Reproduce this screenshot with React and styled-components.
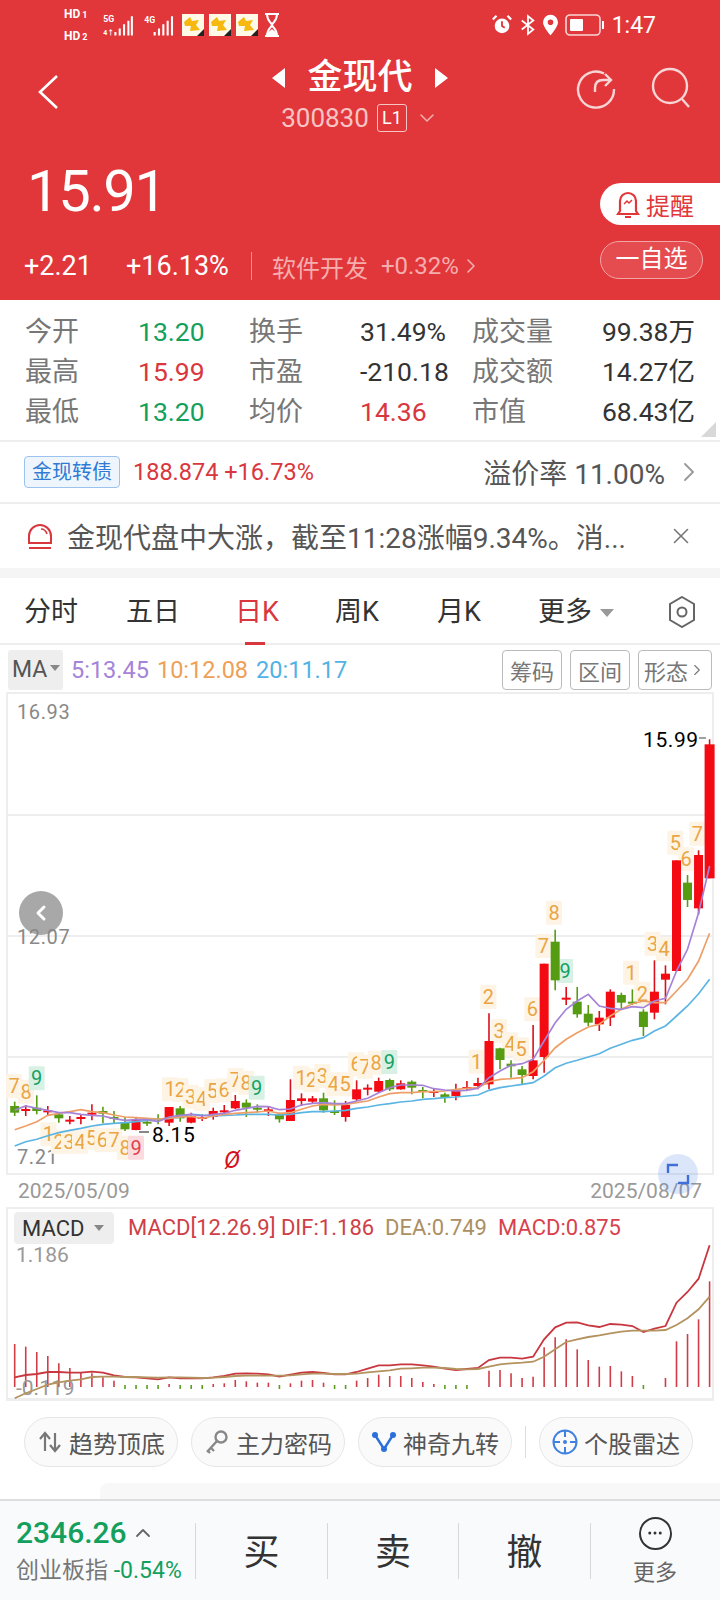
import React from "react";
import styled, { createGlobalStyle } from "styled-components";
import { ChevronLeft, ChevronRight, ChevronDown, ChevronUp, X, Ellipsis } from "lucide-react";

const GlobalStyle = createGlobalStyle`
  html, body { margin: 0; padding: 0; background: #fff; }
  * { box-sizing: border-box; }
  body { font-family: Roboto, "Noto Sans CJK SC", sans-serif; }
`;

const RED = "#e1373b";
const UP = "#d9363e";
const DOWN = "#12a05c";
const ORANGE = "#e9a544";

// chart data read off the picture: stepX per candle, y in page pixels
const stepX = (i) => 14.7 + 11.03 * i;
const L = (v) => 880 + v / 3;
const R = (v) => 700 + v / 3;

// [kind, bodyTop, bodyBottom, wickTop, wickBottom]
const candlesLeft = [
  ["g", 675, 695, 662, 705], ["r", 684, 688, 672, 705], ["g", 680, 690, 643, 700], ["r", 688, 692, 675, 705],
  ["g", 700, 712, 698, 725], ["r", 716, 720, 705, 730], ["r", 708, 712, 700, 730], ["r", 695, 699, 670, 718],
  ["g", 690, 698, 677, 727], ["g", 708, 712, 690, 726], ["g", 724, 745, 708, 750], ["r", 716, 747, 710, 748],
  ["g", 722, 724, 715, 735], ["g", 712, 714, 700, 730], ["r", 678, 725, 678, 735], ["g", 682, 712, 675, 722],
  ["r", 705, 725, 695, 727], ["r", 708, 711, 700, 720], ["r", 690, 708, 680, 716], ["r", 688, 691, 672, 705],
  ["r", 660, 682, 642, 684], ["g", 665, 680, 655, 708], ["g", 680, 683, 670, 695], ["r", 685, 688, 678, 705],
  ["g", 700, 715, 695, 725], ["r", 657, 720, 595, 720], ["r", 652, 660, 637, 675], ["r", 652, 662, 645, 668],
  ["g", 652, 688, 635, 695], ["g", 690, 692, 658, 702], ["r", 672, 708, 660, 722], ["r", 625, 655, 598, 660],
];
const candlesRight = [
  ["r", 1160, 1165, 1150, 1183], ["r", 1140, 1172, 1130, 1175], ["g", 1137, 1165, 1133, 1170], ["r", 1147, 1165, 1138, 1166],
  ["g", 1142, 1160, 1138, 1180], ["g", 1167, 1170, 1158, 1192], ["r", 1170, 1173, 1162, 1188], ["g", 1180, 1190, 1175, 1205],
  ["r", 1168, 1185, 1148, 1198], ["r", 1158, 1162, 1140, 1170], ["r", 1146, 1155, 1130, 1165], ["r", 1020, 1150, 937, 1165],
  ["g", 1042, 1077, 1040, 1105], ["g", 1088, 1096, 1078, 1130], ["g", 1105, 1122, 1095, 1150], ["r", 1078, 1125, 972, 1135],
  ["r", 788, 1068, 788, 1115], ["g", 722, 838, 686, 868], ["r", 890, 895, 858, 912], ["g", 902, 940, 858, 950],
  ["g", 938, 965, 912, 975], ["r", 950, 970, 930, 990], ["r", 872, 950, 865, 975], ["g", 882, 905, 875, 925],
  ["g", 902, 908, 865, 912], ["g", 932, 978, 925, 1005], ["r", 872, 935, 778, 955], ["r", 818, 836, 793, 910],
  ["r", 478, 810, 478, 812], ["g", 545, 597, 522, 618], ["r", 462, 622, 448, 640], ["r", 130, 532, 115, 532],
];
const candles = [
  ...candlesLeft.map(([k, a, b, c, d]) => [k, L(a), L(b), L(c), L(d)]),
  ...candlesRight.map(([k, a, b, c, d]) => [k, R(a), R(b), R(c), R(d)]),
];

const toLine = (left, right) =>
  [...left.map(L), ...right.map(R)].map((y, i) => `${stepX(i).toFixed(1)},${y.toFixed(1)}`).join(" ");

const ma5 = toLine(
  [688, 675, 682, 688, 695, 695, 700, 703, 705, 713, 718, 716, 716, 722, 708, 703, 700, 705, 700, 697, 688, 682, 676, 677, 686, 684, 672, 667, 665, 668, 668, 660],
  [1192, 1175, 1160, 1152, 1152, 1153, 1163, 1167, 1170, 1168, 1162, 1130, 1110, 1093, 1088, 1075, 1020, 965, 925, 900, 880, 915, 922, 925, 917, 920, 900, 892, 810, 745, 635, 495]
);
const ma10 = toLine(
  [746, 735, 722, 703, 697, 692, 686, 692, 695, 702, 708, 710, 712, 714, 712, 708, 706, 712, 705, 700, 697, 695, 693, 690, 697, 695, 685, 675, 670, 672, 670, 665],
  [1200, 1188, 1178, 1175, 1175, 1172, 1172, 1170, 1165, 1162, 1160, 1142, 1135, 1133, 1130, 1112, 1078, 1040, 1015, 995, 978, 970, 945, 925, 908, 900, 905, 905, 870, 835, 780, 697]
);
const ma20 = toLine(
  [795, 782, 775, 764, 755, 748, 742, 735, 730, 727, 725, 722, 718, 714, 712, 708, 700, 702, 705, 703, 702, 700, 700, 700, 702, 700, 695, 692, 692, 690, 688, 682],
  [1218, 1212, 1208, 1203, 1200, 1195, 1193, 1190, 1188, 1185, 1182, 1168, 1160, 1155, 1150, 1145, 1125, 1100, 1087, 1078, 1068, 1058, 1042, 1030, 1018, 1010, 990, 975, 945, 915, 878, 835]
);

// [digit, x, y] in the two crops; kind n = orange, g = green 9, r = red 9
const tagsLeft = [
  ["7", 42, 615], ["8", 78, 632], ["9", 110, 592, "g"], ["1", 145, 760], ["2", 177, 782], ["3", 207, 782],
  ["4", 240, 782], ["5", 275, 770], ["6", 307, 778], ["7", 342, 777], ["8", 375, 800], ["9", 408, 800, "r"],
  ["1", 510, 625], ["2", 541, 627], ["3", 572, 647], ["4", 605, 655], ["5", 637, 630], ["6", 672, 628],
  ["7", 706, 597], ["8", 738, 605], ["9", 770, 620, "g"], ["1", 903, 590], ["2", 935, 598], ["3", 967, 585],
  ["4", 1000, 610], ["5", 1035, 610], ["6", 1068, 550],
];
const tagsRight = [
  ["7", 15, 1097], ["8", 48, 1085], ["9", 88, 1083, "g"], ["1", 350, 1082], ["2", 385, 888], ["3", 417, 990],
  ["4", 450, 1030], ["5", 483, 1045], ["6", 517, 925], ["7", 550, 735], ["8", 582, 635], ["9", 615, 810, "g"],
  ["1", 813, 815], ["2", 847, 878], ["3", 878, 728], ["4", 912, 745], ["5", 946, 425], ["6", 978, 475], ["7", 1012, 398],
];
const tags = [
  ...tagsLeft.map(([d, x, y, k]) => [d, x / 3, L(y), k]),
  ...tagsRight.map(([d, x, y, k]) => [d, 360 + x / 3, R(y), k]),
];
const tagColors = {
  n: ["#fdf4e6", ORANGE],
  g: ["#d9f1e4", "#14a163"],
  r: ["#fbdcde", "#e0404c"],
};

const M = (v) => 1190 + v / 3;
// top of each MACD bar; above zero is red. "g" bars are short green ticks
const macdBars = [
  462, 470, 486, 498, 520, 534, 546, 550, 562, 572, "g", "g", "g", "g", 582, "g", "g", "g", 582, 580, 570, 574, 578, 578, "g", 580,
  572, 570, 578, "g", "g", 572, 564, 554, 558, 558, 564, 576, 582, "g", "g", "g", null, 542, 540, 550, 564, 560, 472, 442, 448, 478,
  510, 530, 528, 544, 558, "g", null, 564, 454, 432, 388, 274,
];
const dif = [562, 555, 552, 546, 546, 548, 548, 545, 548, 556, 561, 562, 565, 568, 562, 565, 565, 565, 562, 558, 551, 550, 551, 553, 560, 554, 548, 546, 549, 553, 553, 546, 536, 526, 526, 523, 523, 526, 530, 536, 540, 537, 534, 510, 503, 503, 506, 500, 448, 412, 398, 397, 406, 411, 402, 404, 408, 426, 416, 408, 338, 306, 266, 166];
const dea = [625, 610, 597, 584, 577, 572, 568, 561, 560, 560, 561, 561, 562, 563, 562, 562, 563, 564, 563, 561, 558, 557, 557, 557, 557, 556, 553, 551, 551, 552, 552, 551, 547, 544, 541, 536, 535, 533, 533, 534, 537, 538, 537, 530, 523, 520, 518, 515, 500, 478, 456, 448, 441, 436, 430, 425, 422, 422, 422, 420, 405, 385, 358, 320];
const macdLine = (ys) => ys.map((v, i) => `${stepX(i).toFixed(1)},${M(v).toFixed(1)}`).join(" ");

const stats = [
  ["今开", "13.20", DOWN, "换手", "31.49%", "#333", "成交量", "99.38万"],
  ["最高", "15.99", UP, "市盈", "-210.18", "#333", "成交额", "14.27亿"],
  ["最低", "13.20", DOWN, "均价", "14.36", UP, "市值", "68.43亿"],
];

function YellowApp() {
  return (
    <AppIcon viewBox="0 0 22 22">
      <rect width="22" height="22" fill="#fff9e8" />
      <path d="M2 8 L8 3 L10 7 L17 6 L14 11 L18 16 L8 17 L9 12 L3 12Z" fill="#f7b90f" />
      <path d="M15 22 L22 15 V22Z" fill="#222" />
    </AppIcon>
  );
}

function StatusBar() {
  return (
    <StatusRow>
      <SimStack>
        <SimTag>HD<small>1</small></SimTag>
        <SimTag>HD<small>2</small></SimTag>
      </SimStack>
      <Signal viewBox="0 0 34 30" $w={34}>
        <text x="0" y="11" fontSize="10" fill="#fff" fontWeight="700">5G</text>
        <text x="0" y="26" fontSize="8" fill="#fff" fontWeight="700">4↑</text>
        <path d="M14 27v-4M19 27v-8M24 27v-13M29 27v-17M33 27V5" stroke="#fff" strokeWidth="2.4" />
      </Signal>
      <Signal viewBox="0 0 34 30" $w={34}>
        <text x="0" y="13" fontSize="10" fill="#fff" fontWeight="700">4G</text>
        <path d="M12 27v-4M17 27v-8M22 27v-13M27 27v-17M32 27V5" stroke="#fff" strokeWidth="2.4" />
      </Signal>
      <YellowApp />
      <YellowApp />
      <YellowApp />
      <Signal viewBox="0 0 16 24" $w={16}>
        <path d="M1 1h14M1 23h14M3 1c0 7 4 8 5 11 1-3 5-4 5-11M3 23c0-7 4-8 5-11 1 3 5 4 5 11" stroke="#fff" strokeWidth="2" fill="none" />
        <path d="M3 23c0-4 3-5 5-7 2 2 5 3 5 7Z" fill="#fff" />
      </Signal>
      <StatusRight>
        <Signal viewBox="0 0 24 24" $w={22}>
          <circle cx="12" cy="13" r="8" fill="#fff" />
          <path d="M12 8v5l3 2" stroke={RED} strokeWidth="2" fill="none" />
          <path d="M2 6l4-4M22 6l-4-4" stroke="#fff" strokeWidth="2.4" />
        </Signal>
        <Signal viewBox="0 0 18 24" $w={16}>
          <path d="M2 7l13 10-6 5V2l6 5L2 17" stroke="#fff" strokeWidth="2" fill="none" />
        </Signal>
        <Signal viewBox="0 0 16 22" $w={15}>
          <path fillRule="evenodd" d="M8 0a8 8 0 0 1 8 8c0 5-8 14-8 14S0 13 0 8a8 8 0 0 1 8-8Zm0 5a3 3 0 1 0 0 6 3 3 0 0 0 0-6Z" fill="#fff" />
        </Signal>
        <Signal viewBox="0 0 40 24" $w={40}>
          <rect x="1" y="2" width="34" height="20" rx="4" stroke="#fff" strokeOpacity=".8" strokeWidth="1.6" fill="none" />
          <rect x="5" y="6" width="13" height="12" rx="1" fill="#fff" />
          <path d="M38 8v8" stroke="#fff" strokeWidth="2" />
        </Signal>
        <StatusTime>1:47</StatusTime>
      </StatusRight>
    </StatusRow>
  );
}

function KChart() {
  return (
    <ChartSvg viewBox="8 693 704 481" $h={481}>
      {[814, 935, 1056].map((y) => (
        <line key={y} x1="8" x2="712" y1={y} y2={y} stroke="#eeeeee" strokeWidth="2" />
      ))}
      <g fontSize="20" fill="#888" letterSpacing=".6">
        <text x="17" y="718">16.93</text>
        <text x="17" y="943">12.07</text>
        <text x="17" y="1163">7.21</text>
      </g>
      {tags.map(([d, x, y, k], i) => {
        const [bg, fg] = tagColors[k || "n"];
        return (
          <g key={i}>
            <rect x={x - 8} y={y - 12} width="16" height="24" fill={bg} rx="1" />
            <text x={x} y={y + 7} textAnchor="middle" fontSize="20" fill={fg}>{d}</text>
          </g>
        );
      })}
      {candles.map(([k, a, b, c, d], i) => {
        const x = stepX(i);
        const col = k === "r" ? "#f40a12" : "#559c12";
        const w = i === 63 ? 10 : 9;
        return (
          <g key={i}>
            <line x1={x} x2={x} y1={c} y2={d} stroke={k === "r" ? "#d9101a" : col} strokeWidth="1.6" />
            <rect x={x - w / 2} y={a} width={w} height={Math.max(b - a, 2)} fill={col} />
          </g>
        );
      })}
      <polyline points={ma20} fill="none" stroke="#5bb5e3" strokeWidth="1.7" />
      <polyline points={ma10} fill="none" stroke="#ee9f68" strokeWidth="1.7" />
      <polyline points={ma5} fill="none" stroke="#a583d8" strokeWidth="1.7" />
      <g fontSize="21" fill="#000" letterSpacing=".6">
        <text x="152" y="1141">8.15</text>
        <line x1="139" x2="149" y1="1131" y2="1131" stroke="#555" strokeWidth="1.4" />
        <text x="643" y="746">15.99</text>
        <line x1="699" x2="706" y1="737" y2="737" stroke="#777" strokeWidth="1.4" />
      </g>
      <text x="232" y="1167" textAnchor="middle" fontSize="24" fontStyle="italic" fill="#d4101c">Ø</text>
    </ChartSvg>
  );
}

function MacdChart() {
  return (
    <ChartSvg viewBox="8 1240 704 158" $h={158}>
      {macdBars.map((top, i) => {
        if (top === null) return null;
        const x = stepX(i);
        if (top === "g") {
          return <line key={i} x1={x} x2={x} y1={1385} y2={1389} stroke="#5b9d1c" strokeWidth="1.6" />;
        }
        return <line key={i} x1={x} x2={x} y1={M(top)} y2={1387} stroke="#d13c46" strokeWidth="1.6" />;
      })}
      <g fontSize="21" fill="#999">
        <text x="16" y="1262">1.186</text>
        <text x="16" y="1395">-0.119</text>
      </g>
      <polyline points={macdLine(dif)} fill="none" stroke="#c8373f" strokeWidth="1.8" />
      <polyline points={macdLine(dea)} fill="none" stroke="#b3925f" strokeWidth="1.8" />
    </ChartSvg>
  );
}

const chipIcons = {
  trend: (
    <svg width="26" height="26" viewBox="0 0 26 26" fill="none" stroke="#777" strokeWidth="2.2">
      <path d="M8 22V5M3 10l5-6 5 6M18 4v17M13 16l5 6 5-6" />
    </svg>
  ),
  key: (
    <svg width="26" height="26" viewBox="0 0 26 26" fill="none" stroke="#888" strokeWidth="2.4">
      <circle cx="17" cy="8" r="5.5" />
      <path d="M13 12L3 23M7 19l3 3M4 22l2 2" />
    </svg>
  ),
  nine: (
    <svg width="26" height="26" viewBox="0 0 26 26" fill="none" stroke="#2b6fdb" strokeWidth="2.4">
      <path d="M4 6l9 14 9-14" />
      <circle cx="4" cy="6" r="3" fill="#2b6fdb" stroke="none" />
      <circle cx="22" cy="6" r="3" fill="#2b6fdb" stroke="none" />
      <circle cx="13" cy="20" r="3" fill="#2b6fdb" stroke="none" />
    </svg>
  ),
  radar: (
    <svg width="26" height="26" viewBox="0 0 26 26" fill="none" stroke="#3f80e0" strokeWidth="2">
      <circle cx="13" cy="13" r="11.5" />
      <circle cx="13" cy="13" r="2" fill="#3f80e0" stroke="none" />
      <path d="M13 1v7M13 18v7M1 13h7M18 13h7" />
    </svg>
  ),
};

export default function App() {
  return (
    <Page>
      <GlobalStyle />
      <Header>
        <StatusBar />
        <NavRow>
          <BackIcon width="22" height="36" viewBox="0 0 22 36" fill="none" stroke="#fff" strokeWidth="2.6">
            <path d="M20 2L3 18l17 16" />
          </BackIcon>
          <TitleBox>
            <TitleLine>
              <Arrow $dir="left" />
              <Title>金现代</Title>
              <Arrow $dir="right" />
            </TitleLine>
            <CodeLine>
              300830 <LevelTag>L1</LevelTag>
              <ChevronDown size={24} strokeWidth={1.5} color="#f3b0b0" />
            </CodeLine>
          </TitleBox>
          <NavIcons>
            <svg width="42" height="44" viewBox="0 0 42 44" fill="none" stroke="#f8d5d5" strokeWidth="2.4">
              <path d="M28 7.5A18 18 0 1 0 38 23" />
              <path d="M19 26v-4c0-5 3-8 8-8h7M29 8l6 6-6 6" />
            </svg>
            <svg width="42" height="44" viewBox="0 0 42 44" fill="none" stroke="#f8d5d5" strokeWidth="2.4">
              <circle cx="20" cy="20" r="17" />
              <path d="M32 33l7 8" />
            </svg>
          </NavIcons>
        </NavRow>
        <PriceRow>
          <Price>15.91</Price>
          <RemindBtn>
            <svg width="24" height="30" viewBox="0 0 24 30" fill="none" stroke={RED} strokeWidth="2.2">
              <path d="M4 22V12a8 8 0 0 1 16 0v10l2 3H2ZM9 28h6" />
              <path d="M8 15l3-3 2 2 3-3" strokeWidth="1.5" />
            </svg>
            提醒
          </RemindBtn>
        </PriceRow>
        <QuoteRow>
          <Change>+2.21</Change>
          <Change $gap>+16.13%</Change>
          <QuoteSep />
          <Sector>软件开发</Sector>
          <SectorPct>+0.32%</SectorPct>
          <ChevronRight size={24} strokeWidth={1.6} color="#f3b0b0" />
          <WatchBtn>一自选</WatchBtn>
        </QuoteRow>
      </Header>

      <StatsPanel>
        {stats.map((r) => (
          <React.Fragment key={r[0]}>
            <StatLabel>{r[0]}</StatLabel>
            <StatValue $color={r[2]}>{r[1]}</StatValue>
            <StatLabel>{r[3]}</StatLabel>
            <StatValue $color={r[5]}>{r[4]}</StatValue>
            <StatLabel>{r[6]}</StatLabel>
            <StatValue $color="#333" $right>{r[7]}</StatValue>
          </React.Fragment>
        ))}
        <Corner />
      </StatsPanel>

      <BondRow>
        <BondTag>金现转债</BondTag>
        <BondQuote>188.874 +16.73%</BondQuote>
        <Premium>溢价率 11.00%</Premium>
        <ChevronRight size={32} strokeWidth={1.4} color="#999" />
      </BondRow>

      <NoticeRow>
        <svg width="26" height="26" viewBox="0 0 26 26" fill="none" stroke="#d9363e" strokeWidth="2">
          <path d="M2 20v-7a11 11 0 0 1 22 0v7ZM2 25h22" />
          <path d="M14 6c3 0 5 2 6 5" strokeWidth="1.6" />
        </svg>
        <NoticeText>金现代盘中大涨，截至11:28涨幅9.34%。消...</NoticeText>
        <X size={26} strokeWidth={1.5} color="#777" />
      </NoticeRow>
      <Band />

      <Tabs>
        <Tab>分时</Tab>
        <Tab>五日</Tab>
        <Tab $active>日K</Tab>
        <Tab>周K</Tab>
        <Tab>月K</Tab>
        <Tab>更多<TabCaret /></Tab>
        <svg width="28" height="32" viewBox="0 0 28 32" fill="none" stroke="#666" strokeWidth="2">
          <path d="M14 1l12 7v16l-12 7-12-7V8Z" />
          <circle cx="14" cy="16" r="4.5" />
        </svg>
      </Tabs>

      <MaRow>
        <MaBadge>MA<SmallCaret /></MaBadge>
        <MaValue $color="#a583d8">5:13.45</MaValue>
        <MaValue $color="#ee9f58">10:12.08</MaValue>
        <MaValue $color="#52b2e6">20:11.17</MaValue>
        <MaTools>
          <ToolBtn>筹码</ToolBtn>
          <ToolBtn>区间</ToolBtn>
          <ToolBtn $wide>形态<ChevronRight size={18} strokeWidth={1.5} /></ToolBtn>
        </MaTools>
      </MaRow>

      <ChartFrame>
        <BackBubble><ChevronLeft size={24} strokeWidth={3} color="#fff" /></BackBubble>
        <KChart />
        <ZoomBubble>
          <svg width="24" height="24" viewBox="0 0 24 24" fill="none" stroke="#3f6fd8" strokeWidth="2.4">
            <path d="M2 11V3h10M22 13v8H12" />
          </svg>
        </ZoomBubble>
      </ChartFrame>
      <DateRow>
        <span>2025/05/09</span>
        <span>2025/08/07</span>
      </DateRow>

      <MacdFrame>
        <MacdHead>
          <MacdBadge>MACD<SmallCaret /></MacdBadge>
          <MacdText $color="#cf3f48">MACD[12.26.9] DIF:1.186</MacdText>
          <MacdText $color="#ab8f63">DEA:0.749</MacdText>
          <MacdText $color="#d9424c">MACD:0.875</MacdText>
        </MacdHead>
        <MacdChart />
      </MacdFrame>

      <Chips>
        <Chip>{chipIcons.trend}趋势顶底</Chip>
        <Chip>{chipIcons.key}主力密码</Chip>
        <Chip>{chipIcons.nine}神奇九转</Chip>
        <ChipSep />
        <Chip>{chipIcons.radar}个股雷达</Chip>
      </Chips>
      <PeekCard />

      <BottomBar>
        <IndexBox>
          <IndexValue>2346.26<ChevronUp size={24} strokeWidth={1.8} color="#666" /></IndexValue>
          <IndexName>创业板指 <em>-0.54%</em></IndexName>
        </IndexBox>
        <TradeBtn>买</TradeBtn>
        <TradeBtn>卖</TradeBtn>
        <TradeBtn>撤</TradeBtn>
        <MoreBtn>
          <MoreCircle><Ellipsis size={18} strokeWidth={2} color="#333" /></MoreCircle>
          更多
        </MoreBtn>
      </BottomBar>
    </Page>
  );
}

const Page = styled.div`
  width: 720px;
  height: 1600px;
  overflow: hidden;
  background: #fff;
  display: flex;
  flex-direction: column;
`;
const Header = styled.header`
  height: 300px;
  background: ${RED};
  color: #fff;
  display: flex;
  flex-direction: column;
`;
const StatusRow = styled.div`
  height: 48px;
  padding: 2px 64px 0;
  display: flex;
  align-items: center;
  gap: 7px;
`;
const SimStack = styled.div`
  width: 30px;
  display: flex;
  flex-direction: column;
  gap: 7px;
`;
const SimTag = styled.span`
  font-size: 12px;
  line-height: 14px;
  font-weight: 700;
  color: #fff;
  small { font-size: 9px; margin-left: 2px; }
`;
const Signal = styled.svg`
  width: ${(p) => p.$w}px;
  height: 26px;
  flex: none;
`;
const AppIcon = styled.svg`
  width: 22px;
  height: 22px;
  flex: none;
  margin-right: -1px;
  margin-left: -1px;
`;
const StatusRight = styled.div`
  margin-left: auto;
  margin-right: 0;
  display: flex;
  align-items: center;
  gap: 7px;
`;
const StatusTime = styled.span`
  font-size: 23px;
  color: #fff;
`;
const NavRow = styled.div`
  height: 100px;
  padding: 0 28px 20px 37px;
  display: flex;
  align-items: center;
  position: relative;
`;
const BackIcon = styled.svg`
  margin-top: 8px;
  flex: none;
`;
const TitleBox = styled.div`
  position: absolute;
  left: 0;
  right: 0;
  top: 7px;
  display: flex;
  flex-direction: column;
  align-items: center;
`;
const TitleLine = styled.div`
  display: flex;
  align-items: center;
  gap: 22px;
`;
const Title = styled.div`
  font-size: 35px;
  line-height: 46px;
  font-weight: 500;
`;
const Arrow = styled.i`
  width: 0;
  height: 0;
  border-top: 10px solid transparent;
  border-bottom: 10px solid transparent;
  ${(p) => (p.$dir === "left" ? "border-right: 13px solid #fff;" : "border-left: 13px solid #fff;")}
`;
const CodeLine = styled.div`
  display: flex;
  align-items: center;
  gap: 8px;
  font-size: 26px;
  line-height: 34px;
  color: #f7c4c4;
`;
const LevelTag = styled.span`
  font-size: 18px;
  line-height: 26px;
  width: 30px;
  text-align: center;
  color: #fff;
  border: 1px solid #f7c4c4;
  border-radius: 3px;
`;
const NavIcons = styled.div`
  margin-left: auto;
  display: flex;
  gap: 32px;
`;
const PriceRow = styled.div`
  height: 88px;
  padding-left: 27px;
  display: flex;
  align-items: center;
  justify-content: space-between;
`;
const Price = styled.div`
  font-size: 58px;
  line-height: 70px;
  letter-spacing: -1.4px;
  margin-bottom: 2px;
`;
const RemindBtn = styled.div`
  width: 120px;
  height: 42px;
  margin-top: 24px;
  background: #fff;
  color: ${RED};
  border-radius: 21px 0 0 21px;
  display: flex;
  align-items: center;
  padding-left: 16px;
  gap: 6px;
  font-size: 24px;
`;
const QuoteRow = styled.div`
  height: 60px;
  padding: 0 17px 0 24px;
  display: flex;
  align-items: center;
`;
const Change = styled.span`
  font-size: 27px;
  margin-left: ${(p) => (p.$gap ? "34px" : "0")};
`;
const QuoteSep = styled.i`
  width: 1px;
  height: 28px;
  background: rgba(255, 255, 255, 0.45);
  margin: 0 20px 0 22px;
`;
const Sector = styled.span`
  font-size: 24px;
  color: #f5aeae;
`;
const SectorPct = styled.span`
  font-size: 24px;
  color: #f5aeae;
  margin-left: 13px;
`;
const WatchBtn = styled.div`
  margin: 0 0 12px auto;
  width: 103px;
  height: 38px;
  border: 1px solid #f2a6a6;
  border-radius: 19px;
  background: #e44c50;
  font-size: 24px;
  line-height: 35px;
  text-align: center;
`;
const StatsPanel = styled.section`
  height: 142px;
  padding: 12px 25px 8px;
  display: grid;
  grid-template-columns: 113px 111px 111px 112px 111px 1fr;
  grid-auto-rows: 40px;
  align-items: center;
  border-bottom: 2px solid #eeeeee;
  position: relative;
`;
const StatLabel = styled.span`
  font-size: 27px;
  line-height: 36px;
  margin-bottom: 1px;
  color: #777;
  white-space: nowrap;
`;
const StatValue = styled.span`
  font-size: 26.5px;
  line-height: 36px;
  color: ${(p) => p.$color};
  text-align: ${(p) => (p.$right ? "right" : "left")};
  white-space: nowrap;
`;
const Corner = styled.i`
  position: absolute;
  right: 4px;
  bottom: 3px;
  border-left: 15px solid transparent;
  border-bottom: 15px solid #d8d8d8;
`;
const BondRow = styled.section`
  height: 62px;
  padding: 0 15px 0 24px;
  display: flex;
  align-items: center;
  border-bottom: 2px solid #eeeeee;
`;
const BondTag = styled.span`
  width: 96px;
  height: 32px;
  background: #eef5fd;
  border: 1px solid #9cc2ee;
  border-radius: 4px;
  color: #2f7bd4;
  font-size: 20px;
  line-height: 30px;
  text-align: center;
`;
const BondQuote = styled.span`
  margin-left: 13px;
  font-size: 23.5px;
  color: ${UP};
`;
const Premium = styled.span`
  margin-left: auto;
  margin-right: 8px;
  font-size: 28px;
  color: #555;
`;
const NoticeRow = styled.section`
  height: 64px;
  padding: 0 26px 0 27px;
  display: flex;
  align-items: center;
`;
const NoticeText = styled.span`
  flex: 1;
  margin-left: 14px;
  font-size: 28px;
  color: #555;
  white-space: nowrap;
`;
const Band = styled.div`
  height: 10px;
  background: #f5f5f5;
`;
const Tabs = styled.nav`
  height: 67px;
  padding: 0 24px;
  display: grid;
  grid-template-columns: 102px 109px 100px 102px 101px 1fr auto;
  align-items: center;
  border-bottom: 2px solid #eeeeee;
`;
const Tab = styled.span`
  position: relative;
  font-size: 27px;
  line-height: 65px;
  padding-top: 2px;
  display: flex;
  align-items: center;
  color: ${(p) => (p.$active ? UP : "#333")};
  ${(p) =>
    p.$active &&
    `&::after {
      content: "";
      position: absolute;
      left: 10px;
      bottom: 0;
      width: 20px;
      height: 3px;
      background: ${UP};
    }`}
`;
const TabCaret = styled.i`
  margin-left: 8px;
  border-left: 7px solid transparent;
  border-right: 7px solid transparent;
  border-top: 8px solid #999;
`;
const MaRow = styled.div`
  height: 47px;
  padding: 2px 8px 0;
  display: flex;
  align-items: center;
  gap: 8px;
`;
const MaBadge = styled.span`
  width: 55px;
  height: 40px;
  background: #eeeeee;
  border-radius: 3px;
  font-size: 23px;
  color: #555;
  display: flex;
  align-items: center;
  padding-left: 4px;
`;
const SmallCaret = styled.i`
  margin-left: 3px;
  margin-bottom: 4px;
  border-left: 5px solid transparent;
  border-right: 5px solid transparent;
  border-top: 6px solid #888;
`;
const MaValue = styled.span`
  font-size: 23.5px;
  color: ${(p) => p.$color};
`;
const MaTools = styled.div`
  margin-left: auto;
  display: flex;
  gap: 8px;
`;
const ToolBtn = styled.span`
  width: ${(p) => (p.$wide ? "74px" : "60px")};
  height: 40px;
  border: 1px solid #bbb;
  border-radius: 4px;
  color: #777;
  font-size: 22px;
  display: flex;
  align-items: center;
  justify-content: center;
`;
const ChartFrame = styled.div`
  position: relative;
  height: 483px;
  margin: 0 6px;
  border: 2px solid #eeeeee;
`;
const ChartSvg = styled.svg`
  display: block;
  position: relative;
  width: 704px;
  height: ${(p) => p.$h}px;
  font-family: Roboto, sans-serif;
  overflow: visible;
`;
const BackBubble = styled.div`
  position: absolute;
  left: 11px;
  top: 197px;
  width: 44px;
  height: 44px;
  border-radius: 50%;
  background: #a8a8a8;
  display: flex;
  align-items: center;
  justify-content: center;
`;
const ZoomBubble = styled.div`
  position: absolute;
  right: 14px;
  bottom: -21px;
  width: 40px;
  height: 40px;
  border-radius: 50%;
  background: rgba(80, 130, 235, 0.2);
  display: flex;
  align-items: center;
  justify-content: center;
`;
const DateRow = styled.div`
  height: 32px;
  padding: 0 18px;
  display: flex;
  align-items: center;
  justify-content: space-between;
  font-size: 21px;
  color: #999;
`;
const MacdFrame = styled.div`
  height: 194px;
  margin: 0 6px;
  border: 2px solid #eeeeee;
  border-bottom-width: 3px;
`;
const MacdHead = styled.div`
  height: 31px;
  padding: 3px 0 0 6px;
  display: flex;
  align-items: flex-start;
`;
const MacdBadge = styled.span`
  width: 100px;
  height: 32px;
  background: #eeeeee;
  border-radius: 4px;
  font-size: 22px;
  color: #333;
  display: flex;
  align-items: center;
  padding-left: 8px;
  margin-right: 14px;
  i { margin-left: 10px; margin-bottom: 0; }
`;
const MacdText = styled.span`
  font-size: 22px;
  line-height: 32px;
  color: ${(p) => p.$color};
  margin-right: 11px;
  white-space: nowrap;
`;
const Chips = styled.div`
  height: 82px;
  padding: 0 24px;
  display: flex;
  align-items: center;
  gap: 13px;
`;
const Chip = styled.span`
  width: 154px;
  height: 50px;
  border: 1px solid #e6e6e6;
  border-radius: 25px;
  background: #fafafa;
  color: #555;
  font-size: 24px;
  display: flex;
  align-items: center;
  justify-content: center;
  gap: 6px;
`;
const ChipSep = styled.i`
  width: 1px;
  height: 32px;
  background: #ddd;
`;
const PeekCard = styled.div`
  height: 16px;
  margin-left: 100px;
  background: #f8f8f8;
  border-radius: 8px 0 0 0;
`;
const BottomBar = styled.footer`
  flex: 1;
  background: #f9fafc;
  border-top: 2px solid #dedede;
  display: grid;
  grid-template-columns: 195px 132px 131px 132px 1fr;
  align-items: center;
`;
const IndexBox = styled.div`
  padding-left: 16px;
  white-space: nowrap;
`;
const IndexValue = styled.div`
  font-size: 30px;
  line-height: 40px;
  font-weight: 500;
  color: ${DOWN};
  display: flex;
  align-items: center;
  gap: 4px;
`;
const IndexName = styled.div`
  font-size: 23px;
  line-height: 36px;
  color: #777;
  em {
    font-style: normal;
    font-size: 23px;
    color: ${DOWN};
  }
`;
const TradeBtn = styled.div`
  height: 56px;
  border-left: 1px solid #d8d8d8;
  font-size: 36px;
  line-height: 60px;
  text-align: center;
  color: #333;
`;
const MoreBtn = styled.div`
  height: 80px;
  padding-top: 6px;
  display: flex;
  flex-direction: column;
  align-items: center;
  font-size: 22px;
  line-height: 30px;
  color: #666;
  position: relative;
  &::before {
    content: "";
    position: absolute;
    left: 0;
    top: 12px;
    height: 56px;
    width: 1px;
    background: #d8d8d8;
  }
`;
const MoreCircle = styled.div`
  width: 33px;
  height: 33px;
  border: 2px solid #333;
  border-radius: 50%;
  display: flex;
  align-items: center;
  justify-content: center;
  margin-bottom: 8px;
`;
